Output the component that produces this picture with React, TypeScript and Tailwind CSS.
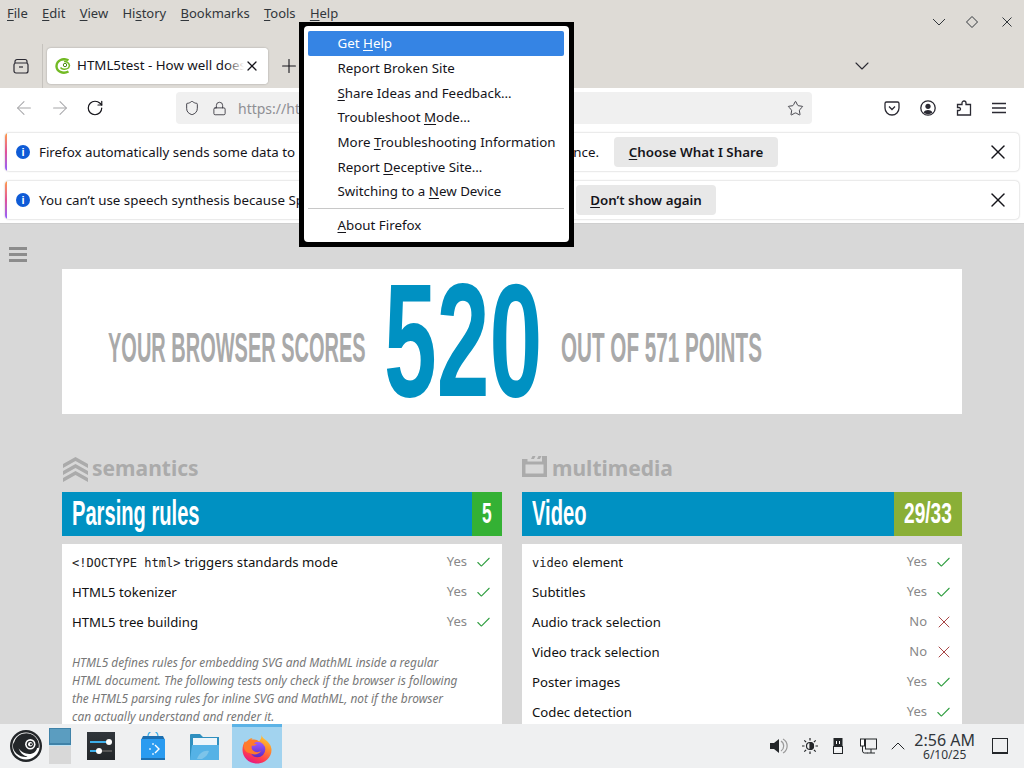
import React from "react";
import { X, Check, ChevronDown, ArrowLeft, ArrowRight, RotateCw, Plus, Star, ChevronUp, Shield, Lock } from "lucide-react";

const U = ({ children }: { children: React.ReactNode }) => <span className="underline underline-offset-2">{children}</span>;

function Suse() {
  return (
    <svg width="32" height="32" viewBox="0 0 32 32">
      <circle cx="16" cy="16" r="16" fill="#232629" />
      <circle cx="16" cy="16" r="13.6" fill="#fff" />
      <path d="M4.300 12C6 6.500 11 3.200 16.500 3.200c5 0 9.500 3 11.400 7.500 1 2.500 1.300 5.300.6 7.300h-1.500c-.4 3.300-3.500 6-7.800 6-4.500 0-8-2.300-10.600-5.500 1.500 4 4.300 7 8.900 8.300-.3.100-.8.200-1.500.2C8.500 27 3 22 2.900 16c0-1.500.5-3 1.400-4z" fill="#232629" />
      <circle cx="20.300" cy="14.300" r="5.200" fill="#fff" />
      <circle cx="20.300" cy="14.300" r="3.600" fill="#232629" />
      <circle cx="20.300" cy="14.300" r="2.300" fill="#fff" />
      <circle cx="21" cy="14.300" r="1.100" fill="#232629" />
    </svg>
  );
}

function Favicon() {
  return (
    <svg width="16" height="16" viewBox="0 0 16 16" fill="none">
      <path d="M13.500 2.300C8 -.5 1.800 2.500 1.500 8c-.2 5.500 6.500 8.500 12 5.500" stroke="#73ba25" strokeWidth="2.400" />
      <path d="M5.500 9.500c1.500 2 5 2.500 8 .5l1-2.500c-.5-2.500-3-4.500-5.500-4" stroke="#73ba25" strokeWidth="1.500" />
      <circle cx="10" cy="7" r="1.700" stroke="#4e8a18" strokeWidth="1" />
    </svg>
  );
}

function Firefox() {
  return (
    <svg width="32" height="32" viewBox="0 0 32 32">
      <defs>
        <linearGradient id="ff1" x1="0.75" y1="0" x2="0.3" y2="1">
          <stop offset="0" stopColor="#ffd43b" />
          <stop offset="0.4" stopColor="#ff8c2b" />
          <stop offset="0.75" stopColor="#ff3d4f" />
          <stop offset="1" stopColor="#e31587" />
        </linearGradient>
        <linearGradient id="ff2" x1="0.5" y1="0" x2="0.5" y2="1">
          <stop offset="0" stopColor="#9f5cff" />
          <stop offset="1" stopColor="#5a2bc4" />
        </linearGradient>
      </defs>
      <path d="M20 1c.5 3 1.500 5 4 6.500 3.500 2.500 6.500 6 6.500 10.500 0 7.500-6.500 13.500-14.500 13.500S1.500 25.500 1.500 18c0-3.500.8-6 2.500-9 .3 1 .6 1.600 1.200 2.300C6.500 8 8.500 6.500 11.500 6c-1 1.300-1.200 2.500-.5 3.500 2.500-.8 5-.7 7-.2C20.500 7 21 4 20 1z" fill="url(#ff1)" />
      <circle cx="16.500" cy="17.500" r="7.800" fill="url(#ff2)" />
      <path d="M3 12c2-3 5-4.500 8.500-4.500 2.500 0 5 .5 7 2-2.500 0-4.500.7-5.500 2 1 .5 2 .7 3 .7-1.500 1.500-3.500 2-5 1.300-.8 1.500-.5 3.500 1 5 2.500 2 5.500 2.200 8 .5-2 3.500-7.500 4.500-11.500 2C4 20.500 2 16 3 12z" fill="#ff7a2b" />
    </svg>
  );
}

function Notif({ children, btn, btnClass }: { children: React.ReactNode; btn: React.ReactNode; btnClass: string }) {
  return (
    <div className="relative mx-[5px] h-[38px] rounded-[4px] bg-white shadow-[0_0_2px_rgba(0,0,0,0.3)] flex items-center overflow-hidden">
      <div className="w-[2px] h-full bg-gradient-to-b from-[#ff9a3c] via-[#e0509a] to-[#9059ff] shrink-0" />
      <div className="ml-[9px] w-[14px] h-[14px] rounded-full bg-[#0f5bd6] text-white flex items-center justify-center text-[11px] font-bold shrink-0 font-['Liberation_Sans']">i</div>
      <div className="ml-[9px] text-[13.33px] text-[#15141a] whitespace-nowrap w-[0px] pt-[1px]">{children}</div>
      <button className={`absolute h-[30px] rounded-[4px] bg-[#e8e8e8] pt-[1px] text-[13.33px] font-semibold text-[#15141a] ${btnClass}`}>{btn}</button>
      <X className="absolute right-[9px] text-[#15141a]" size={24} strokeWidth={1.4} />
    </div>
  );
}

function Row({ label, code, yes }: { label: string; code?: string; yes: boolean }) {
  return (
    <div className="h-[30px] flex items-center text-[13.2px] text-[#111]">
      <div className="flex-1 whitespace-nowrap">
        {code && <code className="font-['DejaVu_Sans_Mono'] text-[12px] mr-[4px] text-[#222]">{code}</code>}
        {label}
      </div>
      <span className="text-[13px] text-[#888] mr-[8px] -mt-[2px]">{yes ? "Yes" : "No"}</span>
      {yes ? <Check size={17} strokeWidth={1.5} className="text-[#2f9e3f] -mt-[2px]" /> : <X size={20} strokeWidth={1.2} className="text-[#a84545] -mx-[1.500px] -mt-[2px]" />}
    </div>
  );
}

function Cond({ children, scale, className }: { children: React.ReactNode; scale: string; className: string }) {
  return <span className={`inline-block font-['Liberation_Sans'] font-bold origin-left whitespace-nowrap ${scale} ${className}`}>{children}</span>;
}

const menuItems: React.ReactNode[] = [
  <>Report Broken Site</>,
  <><U>S</U>hare Ideas and Feedback…</>,
  <>Troubleshoot <U>M</U>ode…</>,
  <>More <U>T</U>roubleshooting Information</>,
  <>Report <U>D</U>eceptive Site…</>,
  <>Switching to a <U>N</U>ew Device</>,
];

export default function App() {
  return (
    <div className="relative w-[1024px] h-[768px] overflow-hidden flex flex-col bg-[#d8d8d8] font-['Noto_Sans',sans-serif]">
      {/* Menu bar */}
      <div className="h-[44px] bg-[#dedbd6] flex shrink-0 relative">
        <div className="flex gap-[14.3px] pl-[7px] pt-[4px] text-[13px] text-[#31363b] h-[20px]">
          <span><U>F</U>ile</span><span><U>E</U>dit</span><span><U>V</U>iew</span><span>Hi<U>s</U>tory</span><span><U>B</U>ookmarks</span><span><U>T</U>ools</span><span><U>H</U>elp</span>
        </div>
        <div className="ml-auto flex items-center pr-[12px] pt-[22px] h-[22px] text-[#31363b]">
          <svg width="14" height="14" viewBox="0 0 14 14" fill="none" stroke="currentColor"><path d="M1 4l6 6 6-6" /></svg>
          <svg width="20" height="14" viewBox="0 0 20 14" fill="none" stroke="currentColor" className="ml-[16px]"><path d="M10 1.500L15.500 7 10 12.500 4.500 7z" /></svg>
          <svg width="10" height="10" viewBox="0 0 10 10" fill="none" stroke="currentColor" className="ml-[20px]"><path d="M.5.500l9 9M9.500.500l-9 9" /></svg>
        </div>
      </div>
      {/* Tab bar */}
      <div className="h-[44px] bg-[#dedbd6] flex items-start shrink-0">
        <div className="w-[43px] h-[44px] flex items-center justify-center border-r border-[#c5c2bd] pr-[1px]">
          <svg width="16" height="16" viewBox="0 0 16 16" fill="none" stroke="#2b2a33" strokeWidth="1.2"><rect x="1" y="5" width="14" height="10" rx="2" /><path d="M6 9h4" /><path d="M2 5V3.500A2 2 0 0 1 4 1.500h8a2 2 0 0 1 2 2V5" /></svg>
        </div>
        <div className="ml-[4px] mt-[4px] w-[221px] h-[36px] bg-white rounded-[4px] shadow-[0_0_2px_rgba(0,0,0,0.3)] flex items-center pl-[8px] relative overflow-hidden">
          <Favicon />
          <span className="ml-[6px] text-[13.33px] text-[#15141a] whitespace-nowrap">HTML5test - How well does</span>
          <div className="absolute right-[24px] top-0 w-[18px] h-full bg-gradient-to-r from-transparent to-white" />
          <div className="absolute right-0 top-0 w-[24px] h-full bg-white flex items-center justify-center">
            <X size={16} strokeWidth={1.9} className="text-[#15141a] mr-[8px]" />
          </div>
        </div>
        <Plus size={22} strokeWidth={1.2} className="ml-[10px] mt-[11px] text-[#15141a]" />
        <ChevronDown size={24} strokeWidth={1.1} className="ml-[550px] mt-[10px] text-[#2b2a33]" />
      </div>
      {/* Toolbar */}
      <div className="h-[40px] bg-white flex items-center shrink-0 relative">
        <ArrowLeft size={22} strokeWidth={1.1} className="ml-[13px] text-[#a5a5a8]" />
        <ArrowRight size={22} strokeWidth={1.1} className="ml-[14px] text-[#a5a5a8]" />
        <RotateCw size={18} strokeWidth={1.6} className="ml-[15px] text-[#15141a]" />
        <div className="ml-[72px] w-[636px] h-[32px] rounded-[4px] bg-[#f0f0f0] flex items-center pl-[8px] relative">
          <Shield size={16} strokeWidth={1.3} className="text-[#2b2a33]" />
          <Lock size={15} strokeWidth={1.3} className="ml-[12px] text-[#2b2a33]" />
          <span className="ml-[11px] text-[14px] text-[#8f8f94]">https://html5test.com</span>
          <Star size={17} strokeWidth={1.2} className="absolute right-[8px] text-[#2b2a33]" />
        </div>
        <svg width="16" height="16" viewBox="0 0 16 16" fill="none" stroke="#2b2a33" strokeWidth="1.300" className="ml-[72px]"><path d="M2.500 2h11A1.500 1.500 0 0 1 15 3.500V8a7 7 0 0 1-14 0V3.500A1.500 1.500 0 0 1 2.500 2z" /><path d="M5 6.500l3 3 3-3" /></svg>
        <svg width="16" height="16" viewBox="0 0 16 16" className="ml-[20px]"><circle cx="8" cy="8" r="7.200" fill="none" stroke="#2b2a33" strokeWidth="1.300" /><circle cx="8" cy="6.300" r="2.600" fill="#2b2a33" /><path d="M3.500 12.500c1-2 3-2.600 4.500-2.600s3.500.6 4.500 2.600a7 7 0 0 1-9 0z" fill="#2b2a33" /></svg>
        <svg width="16" height="16" viewBox="0 0 16 16" fill="none" stroke="#2b2a33" strokeWidth="1.300" className="ml-[20px]"><path d="M1.500 15V10.500H3a1.500 1.500 0 0 0 0-3H1.500V4.500H6V3a2 2 0 0 1 4 0v1.500h4.500V15z" /></svg>
        <svg width="14" height="12" viewBox="0 0 14 12" fill="none" stroke="#2b2a33" strokeWidth="1.300" className="ml-[20px]"><path d="M0 1.500h14M0 6h14M0 10.500h14" /></svg>
      </div>
      {/* Notifications */}
      <div className="h-[96px] bg-white shrink-0 flex flex-col gap-[10px] pt-[5px] border-b border-[#cfcfcf]">
        <Notif btn={<><U>C</U>hoose What I Share</>} btnClass="left-[609px] w-[164px]">
          Firefox automatically sends some data to Mozilla so that we can improve your experience.
        </Notif>
        <Notif btn={<><U>D</U>on’t show again</>} btnClass="left-[571px] w-[140px]">
          You can’t use speech synthesis because Speech Dispatcher isn’t installed.
        </Notif>
      </div>
      {/* Page */}
      <div className="flex-1 min-h-0 overflow-hidden relative px-[62px]">
        <svg width="18" height="15" viewBox="0 0 18 15" fill="#8c8c8c" className="absolute left-[9px] top-[23px]"><rect width="18" height="3" /><rect y="6" width="18" height="3" /><rect y="12" width="18" height="3" /></svg>
        <div className="mt-[45px] h-[145px] bg-white flex items-center relative">
          <Cond scale="scale-x-[0.476]" className="text-[42px] text-[#a9a9a9] w-[276px] ml-[46px] mt-[12px]">YOUR BROWSER SCORES</Cond>
          <Cond scale="scale-x-[0.585]" className="text-[162px] leading-none text-[#0091c2] w-[177px] -mt-[4px]">520</Cond>
          <Cond scale="scale-x-[0.492]" className="text-[42px] text-[#a9a9a9] w-[200px] mt-[12px]">OUT OF 571 POINTS</Cond>
        </div>
        <div className="grid grid-cols-2 gap-[20px] mt-[40px]">
          <div>
            <div className="h-[38px] flex items-center gap-[3px] pb-[8px]">
              <svg width="27" height="27" viewBox="0 0 27 27" fill="#ababab"><path d="M13.500 1L26 8v4L13.500 5 1 12V8z" /><path d="M13.500 8L26 15v4l-12.500-7L1 19v-4z" /><path d="M13.500 15L26 22v4l-12.500-7L1 26v-4z" /></svg>
              <span className="text-[21px] font-bold text-[#ababab]">semantics</span>
            </div>
            <div className="h-[44px] bg-[#0091c2] flex items-center">
              <Cond scale="scale-x-[0.575]" className="text-[35px] text-white flex-1 ml-[10px] min-w-0 -mt-[1px]">Parsing rules</Cond>
              <div className="w-[30px] h-full bg-[#34b134] flex items-center">
                <Cond scale="scale-x-[0.6]" className="text-[29px] text-white ml-[10px] w-[12px] -mt-[1px]">5</Cond>
              </div>
            </div>
            <div className="mt-[8px] bg-white px-[10px] pt-[4px]">
              <Row code="<!DOCTYPE html>" label="triggers standards mode" yes />
              <Row label="HTML5 tokenizer" yes />
              <Row label="HTML5 tree building" yes />
              <p className="mt-[15px] w-[390px] text-[11.9px] leading-[18px] italic text-[#777]">
                HTML5 defines rules for embedding SVG and MathML inside a regular HTML document. The following tests only check if the browser is following the HTML5 parsing rules for inline SVG and MathML, not if the browser can actually understand and render it.
              </p>
            </div>
          </div>
          <div>
            <div className="h-[38px] flex items-center gap-[5px] pb-[8px]">
              <svg width="25" height="21" viewBox="0 0 25 21" fill="#ababab" className="-mt-[6px]"><path fillRule="evenodd" d="M0 3h5.500v2.500H20V0h5v21H0zM3.500 8.500v9H21.500v-9z" /><path d="M9 3l1.500-3h3L12 3zM15 3l1.500-3h3L18 3z" /></svg>
              <span className="text-[21px] font-bold text-[#ababab]">multimedia</span>
            </div>
            <div className="h-[44px] bg-[#0091c2] flex items-center">
              <Cond scale="scale-x-[0.575]" className="text-[35px] text-white flex-1 ml-[10px] min-w-0 -mt-[1px]">Video</Cond>
              <div className="w-[68px] h-full bg-[#8aaf37] flex items-center">
                <Cond scale="scale-x-[0.66]" className="text-[29px] text-white ml-[10px] w-[58px] -mt-[1px]">29/33</Cond>
              </div>
            </div>
            <div className="mt-[8px] bg-white px-[10px] pt-[4px]">
              <Row code="video" label="element" yes />
              <Row label="Subtitles" yes />
              <Row label="Audio track selection" yes={false} />
              <Row label="Video track selection" yes={false} />
              <Row label="Poster images" yes />
              <Row label="Codec detection" yes />
            </div>
          </div>
        </div>
      </div>
      {/* Taskbar */}
      <div className="h-[44px] bg-[#eff0f1] shrink-0 flex items-center relative">
        <div className="ml-[10px]"><Suse /></div>
        <div className="ml-[7px] w-[22px] h-[36px] flex flex-col">
          <div className="h-[17px] bg-[#5b9dc0] border border-[#3f82a8] border-b-2" />
          <div className="h-[1px] bg-[#bfe3f5]" />
          <div className="flex-1 bg-[#d8d8d8]" />
        </div>
        <div className="ml-[16px] w-[28px] h-[28px] bg-gradient-to-b from-[#31363b] to-[#232629] flex flex-col justify-center gap-[7px] px-[3px]">
          <div className="h-[2px] bg-[#555] relative"><div className="h-[2px] w-[16px] bg-[#3daee9]" /><div className="absolute left-[16px] top-[-2px] w-[6px] h-[6px] rounded-full bg-white" /></div>
          <div className="h-[2px] bg-[#555] relative"><div className="h-[2px] w-[7px] bg-[#3daee9]" /><div className="absolute left-[6px] top-[-2px] w-[6px] h-[6px] rounded-full bg-white" /></div>
        </div>
        <svg width="24" height="28" viewBox="0 0 24 28" className="ml-[26px]"><path d="M7 6V4a5 5 0 0 1 10 0v2" fill="none" stroke="#3daee9" strokeWidth="1.200" /><path d="M2 4h20l2 4H0z" fill="#1d6fb0" /><rect y="7" width="24" height="21" fill="#2a9bf0" /><rect y="26" width="24" height="2" fill="#1d6fb0" /><path d="M14 13l4 4-4 4" stroke="#fff" strokeWidth="1.400" fill="none" /><circle cx="12" cy="12" r="1" fill="#cfeaff" /><circle cx="9" cy="17" r="1" fill="#cfeaff" /><circle cx="12" cy="22" r="1" fill="#cfeaff" /></svg>
        <svg width="29" height="27" viewBox="0 0 29 27" className="ml-[25px]"><path d="M0 2a1 1 0 0 1 1-1h9l3 3h16v23H0z" fill="#2f8fbf" /><rect x="3" y="5" width="24" height="7" fill="#eef5fa" /><path d="M2 12h27v15H0z" fill="#55b2e6" /><path d="M7 26c2-6 7-9 12-8-1 3-3 6-7 8z" fill="#7cc4ea" /></svg>
        <div className="ml-[13px] w-[50px] h-[44px] bg-[#a2d3ef] border-t-[3px] border-[#5cb3e6] flex items-center justify-center"><Firefox /></div>
        <div className="ml-auto flex items-center h-full text-[#232629]">
          <svg width="18" height="16" viewBox="0 0 18 16" className="mr-[14px]"><path d="M0 5h4l5-4v14l-5-4H0z" fill="#232629" /><path d="M11 3a6 6 0 0 1 0 10M13 1a8 8 0 0 1 0 14" fill="none" stroke="#9a9a9a" strokeWidth="1.200" /></svg>
          <svg width="16" height="16" viewBox="0 0 16 16" className="mr-[15px]" stroke="#232629" strokeWidth="1.200" fill="none"><circle cx="8" cy="8" r="3.500" /><path d="M8 4.500a3.500 3.500 0 0 1 0 7z" fill="#232629" /><path d="M8 0v2.500M8 13.500V16M0 8h2.500M13.500 8H16M2.300 2.300l1.800 1.800M11.900 11.900l1.800 1.800M2.300 13.700l1.800-1.800M11.900 4.100l1.800-1.800" /></svg>
          <svg width="10" height="16" viewBox="0 0 10 16" className="mr-[17px]" fill="none" stroke="#232629"><rect x="1" y="0.500" width="8" height="8" fill="#232629" /><rect x="0.500" y="8.500" width="9" height="7" /><path d="M3.500 3v3M6.500 3v3M2 12h6" stroke="#fff" /></svg>
          <svg width="17" height="16" viewBox="0 0 17 16" className="mr-[9px]" fill="none" stroke="#232629"><rect x="5.500" y="1" width="11" height="10" /><path d="M7 15h8M11 11v4" /><rect x="0.500" y="1" width="4" height="7" fill="#fff" /><path d="M2.500 8v5a2 2 0 0 0 2 2h3" /></svg>
          <ChevronUp size={24} strokeWidth={1} className="mr-[4px]" />
          <div className="flex flex-col items-center leading-none text-[#31363b] mr-[17px]">
            <span className="text-[16px]">2:56 AM</span>
            <span className="text-[12px] mt-[1px]">6/10/25</span>
          </div>
          <div className="w-[16px] h-[16px] border border-[#232629] border-b-2 mr-[16px]" />
        </div>
      </div>
      {/* Help menu */}
      <div className="absolute left-[299px] top-[22px] w-[275px] h-[225px] border-x-[5px] border-t-[4px] border-b-[5px] border-black bg-black">
        <div className="w-full h-full bg-white rounded-[4px] pt-[5px] pl-[4px] pr-[5px] text-[13.33px] text-[#15141a]">
          <div className="h-[25px] mb-[0.6px] bg-[#3584e4] rounded-[2px] text-white pl-[29.5px] flex items-center"><span>Get <U>H</U>elp</span></div>
          {menuItems.map((m, i) => (
            <div key={i} className="h-[24.7px] pl-[29.5px] flex items-center whitespace-nowrap">
              <span>{m}</span>
            </div>
          ))}
          <div className="mt-[3.4px] h-px bg-[#c8c8c8]" />
          <div className="h-[33px] pl-[29.5px] flex items-center"><span><U>A</U>bout Firefox</span></div>
        </div>
      </div>
    </div>
  );
}
